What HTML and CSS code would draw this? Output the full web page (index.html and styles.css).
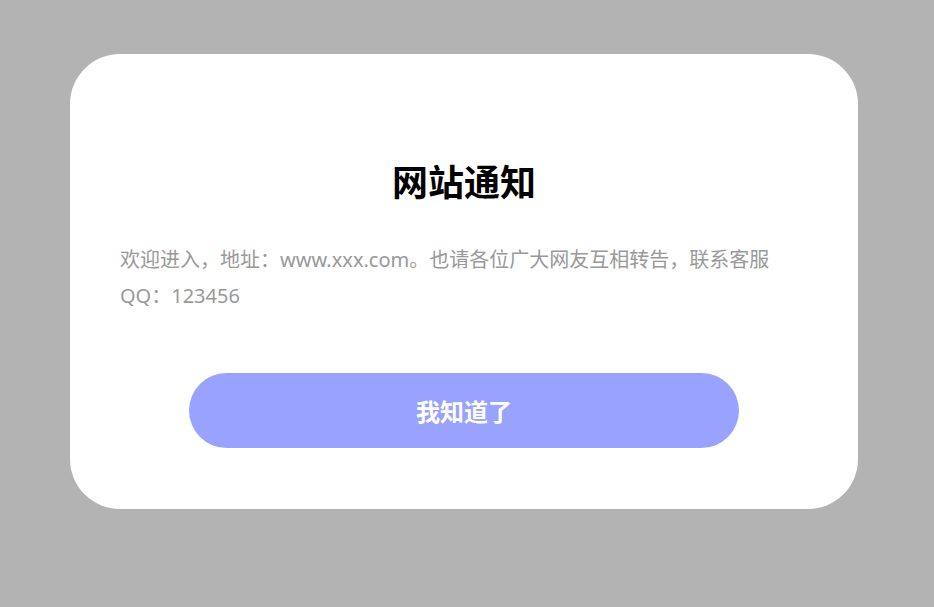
FILE: index.html
```html
<!DOCTYPE html>
<html lang="zh-CN">
<head>
<meta charset="utf-8">
<title>网站通知</title>
<link rel="stylesheet" href="styles.css">
</head>
<body>
<div class="overlay">
  <div class="dialog">
    <h1 class="dialog-title">网站通知</h1>
    <p class="dialog-text">欢迎进入，地址：www.xxx.com。也请各位广大网友互相转告，联系客服QQ：123456</p>
    <div class="dialog-actions">
      <button class="dialog-btn" type="button">我知道了</button>
    </div>
  </div>
</div>
</body>
</html>
```

FILE: styles.css
```css
html, body {
  margin: 0;
  padding: 0;
  height: 100%;
}
body {
  background: #b3b3b3;
  font-family: "Noto Sans CJK SC", "Noto Sans", sans-serif;
}
.overlay {
  padding: 54px 0 0 70px;
}
.dialog {
  box-sizing: border-box;
  width: 788px;
  height: 455px;
  background: #fff;
  border-radius: 50px;
  padding: 101px 50px 0 50px;
}
.dialog-title {
  margin: 0;
  font-size: 36px;
  line-height: 50px;
  font-weight: 700;
  color: #000;
  text-align: center;
}
.dialog-text {
  margin: 37px 0 0 0;
  font-family: "Noto Sans", "Noto Sans CJK SC", sans-serif;
  font-size: 20px;
  line-height: 36px;
  color: #999;
}
.dialog-actions {
  display: flex;
  justify-content: center;
  margin-top: 59px;
}
.dialog-btn {
  width: 550px;
  height: 75px;
  border: none;
  border-radius: 38px;
  background: #99a2ff;
  color: #fff;
  font-family: inherit;
  font-size: 24px;
  font-weight: 700;
  cursor: pointer;
}
```
